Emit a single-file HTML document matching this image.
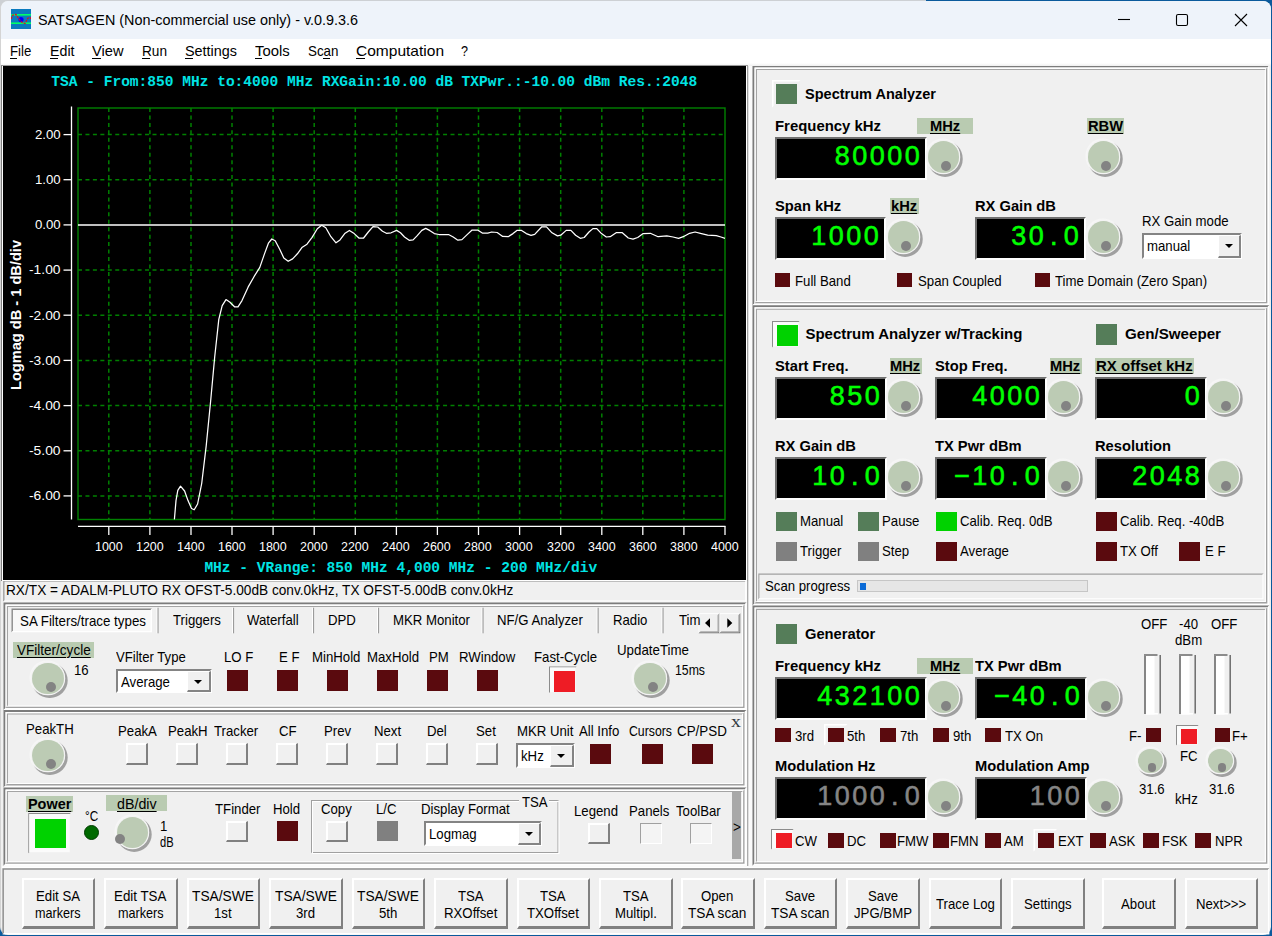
<!DOCTYPE html>
<html><head><meta charset="utf-8"><title>SATSAGEN</title>
<style>
html,body{margin:0;padding:0;}
body{width:1272px;height:936px;overflow:hidden;background:#0b5a9c;font-family:"Liberation Sans",sans-serif;position:relative;}
.a{position:absolute;box-sizing:border-box;}
.m{font-family:"Liberation Mono",monospace;}
.se{font-family:"Liberation Serif",serif;}
.t{position:absolute;white-space:nowrap;line-height:1;transform-origin:0 0;font-size:15px;}
#win{left:0px;top:1px;width:1271px;height:934px;background:#f0f0f0;border-radius:8px;overflow:hidden;border-left:1px solid #d4d4d4;}
#title{left:0;top:0;width:1272px;height:39px;background:#eef3fa;}
#menu{left:0;top:39px;width:1272px;height:24px;background:#fff;}
#menush{left:0;top:63px;width:1272px;height:3px;background:linear-gradient(#fff,#f0f0f0);}
.panel{border:1px solid #fff;background:#f0f0f0;}
.panel:before{content:"";position:absolute;left:0;top:0;right:0;bottom:0;border:2px solid #868686;border-right-color:#fff;border-bottom-color:#fff;}
.panel:after{content:"";position:absolute;left:2px;top:2px;right:0px;bottom:0px;border:2px solid #fff;border-right:2px solid #868686;border-bottom:2px solid #868686;}
.panel>div{position:absolute;left:4px;top:4px;right:2px;bottom:2px;border:1px solid #a0a0a0;border-right-color:#fff;border-bottom-color:#fff;}
.knob{border-radius:50%;background:#bccbb4;box-shadow:0 0 0 1.2px #f3f3f3, -0.8px -0.8px 0 1.7px #f6f6f6, 1.7px 1.9px 0 2px #a0a0a0;}
.knob i{position:absolute;border-radius:50%;background:#838383;}
.lcd{background:#000;border:2px solid #fff;border-top-color:#707070;border-left-color:#707070;text-align:right;white-space:nowrap;overflow:hidden;line-height:1;padding-top:4.7px;}
.lcd b{-webkit-text-stroke:0.55px currentColor;display:inline-block;width:var(--p);text-align:center;font-weight:normal;}
.combo{background:#fff;border:2px solid #fff;border-top-color:#848484;border-left-color:#848484;}
.combo .ct{position:absolute;left:3px;top:2.7px;line-height:1;white-space:nowrap;transform:scaleX(.88);transform-origin:0 0;}
.combo .cb{position:absolute;right:-1px;top:0;bottom:-1px;width:20.5px;background:#f0f0f0;border:1px solid #fff;border-right:2px solid #848484;border-bottom:2px solid #848484;}
.combo .cb i{position:absolute;left:50%;top:50%;margin:-1.6px 0 0 -4.2px;border:4.7px solid transparent;border-top:4.8px solid #000;border-bottom:0;}
.sbtn{background:#f0f0f0;border:1px solid #fff;border-right:2px solid #808080;border-bottom:2px solid #808080;box-shadow:inset 1px 1px 0 #fff;}
.fbtn{background:#f4f4f4;border:1px solid #a0a0a0;border-right-color:#fff;border-bottom-color:#fff;}
.btn{background:#f0f0f0;border:2px solid #fff;border-right:2px solid #808080;border-bottom:3px solid #808080;text-align:center;}
</style></head>
<body>
<div class="a" style="left:0;top:0;width:926px;height:9px;background:#cdd0d4"></div>
<div class="a" id="win">
</div>
<svg class="a" style="left:0;top:0" width="1272" height="936" viewBox="0 0 1272 936"><rect x="745.6" y="65" width="7" height="801" fill="#fbfbfb"/><rect x="747.1" y="65" width="1.2" height="801" fill="#a4a4a4"/><path d="M3.3 580.4H746.3L745.1999999999999 581.5H4.4V600.5L3.3 601.6Z" fill="#8a8a8a"/><path d="M746.3 601.6H3.3L4.4 600.5H745.1999999999999V581.5L746.3 580.4Z" fill="#ffffff"/><path d="M3.5 602.6H746.5L744.5 604.6H5.5V708L3.5 710Z" fill="#7c7c7c"/><path d="M746.5 710H3.5L5.5 708H744.5V604.6L746.5 602.6Z" fill="#ffffff"/><path d="M5.5 604.6H744.5L743.1 606.0H6.9V706.6L5.5 708Z" fill="#ffffff"/><path d="M744.5 708H5.5L6.9 706.6H743.1V606.0L744.5 604.6Z" fill="#a2a2a2"/><path d="M6.9 606.0H743.1L742.0 607.1H8.0V705.5L6.9 706.6Z" fill="#a4a4a4"/><path d="M743.1 706.6H6.9L8.0 705.5H742.0V607.1L743.1 606.0Z" fill="#ffffff"/><rect x="12" y="609" width="139.5" height="23" fill="#f8f8f8"/><path d="M11.5 608.5H152L150.6 609.9H12.9V630.9L11.5 632.3Z" fill="#8a8a8a"/><path d="M152 632.3H11.5L12.9 630.9H150.6V609.9L152 608.5Z" fill="#ffffff"/><rect x="156.5" y="607.7" width="1" height="25.6" fill="#fff"/><rect x="157.5" y="607.7" width="1.1" height="25.6" fill="#9c9c9c"/><rect x="232" y="607.7" width="1" height="25.6" fill="#fff"/><rect x="233" y="607.7" width="1.1" height="25.6" fill="#9c9c9c"/><rect x="312" y="607.7" width="1" height="25.6" fill="#fff"/><rect x="313" y="607.7" width="1.1" height="25.6" fill="#9c9c9c"/><rect x="377" y="607.7" width="1" height="25.6" fill="#fff"/><rect x="378" y="607.7" width="1.1" height="25.6" fill="#9c9c9c"/><rect x="481.5" y="607.7" width="1" height="25.6" fill="#fff"/><rect x="482.5" y="607.7" width="1.1" height="25.6" fill="#9c9c9c"/><rect x="596.6" y="607.7" width="1" height="25.6" fill="#fff"/><rect x="597.6" y="607.7" width="1.1" height="25.6" fill="#9c9c9c"/><rect x="661.5" y="607.7" width="1" height="25.6" fill="#fff"/><rect x="662.5" y="607.7" width="1.1" height="25.6" fill="#9c9c9c"/><rect x="697" y="609" width="44.5" height="25.5" fill="#f0f0f0"/><path d="M698.6 613.3H719.5L718.5 614.3H699.6V632.3L698.6 633.3Z" fill="#ffffff"/><path d="M719.5 633.3H698.6L699.6 632.3H718.5V614.3L719.5 613.3Z" fill="#707070"/><path d="M699.6 614.3H718.5L717.5 615.3H700.6V631.3L699.6 632.3Z" fill="#f0f0f0"/><path d="M718.5 632.3H699.6L700.6 631.3H717.5V615.3L718.5 614.3Z" fill="#a8a8a8"/><path d="M719.4 613.3H740.3L739.3 614.3H720.4V632.3L719.4 633.3Z" fill="#ffffff"/><path d="M740.3 633.3H719.4L720.4 632.3H739.3V614.3L740.3 613.3Z" fill="#707070"/><path d="M720.4 614.3H739.3L738.3 615.3H721.4V631.3L720.4 632.3Z" fill="#f0f0f0"/><path d="M739.3 632.3H720.4L721.4 631.3H738.3V615.3L739.3 614.3Z" fill="#a8a8a8"/><path d="M549 666.5H576.6L575.6 667.5H550V692.1L549 693.1Z" fill="#8c8c8c"/><rect x="550" y="667.5" width="25.6" height="24.6" fill="#fbfbfb"/><path d="M3.5 710H746.5L744.5 712H5.5V785.5L3.5 787.5Z" fill="#7c7c7c"/><path d="M746.5 787.5H3.5L5.5 785.5H744.5V712L746.5 710Z" fill="#ffffff"/><path d="M5.5 712H744.5L743.1 713.4H6.9V784.1L5.5 785.5Z" fill="#ffffff"/><path d="M744.5 785.5H5.5L6.9 784.1H743.1V713.4L744.5 712Z" fill="#a2a2a2"/><path d="M6.9 713.4H743.1L742.0 714.5H8.0V783.0L6.9 784.1Z" fill="#a4a4a4"/><path d="M743.1 784.1H6.9L8.0 783.0H742.0V714.5L743.1 713.4Z" fill="#ffffff"/><path d="M3.5 787.5H746.5L744.5 789.5H5.5V863.7L3.5 865.7Z" fill="#7c7c7c"/><path d="M746.5 865.7H3.5L5.5 863.7H744.5V789.5L746.5 787.5Z" fill="#ffffff"/><path d="M5.5 789.5H744.5L743.1 790.9H6.9V862.3000000000001L5.5 863.7Z" fill="#ffffff"/><path d="M744.5 863.7H5.5L6.9 862.3000000000001H743.1V790.9L744.5 789.5Z" fill="#a2a2a2"/><path d="M6.9 790.9H743.1L742.0 792.0H8.0V861.2L6.9 862.3000000000001Z" fill="#a4a4a4"/><path d="M743.1 862.3000000000001H6.9L8.0 861.2H742.0V792.0L743.1 790.9Z" fill="#ffffff"/><path d="M28.3 813.0H70.8L69.8 814.0H29.3V852.2L28.3 853.2Z" fill="#8c8c8c"/><rect x="29.3" y="814.0" width="40.5" height="38.2" fill="#fbfbfb"/><path d="M311 800H558.5L557.5 801H312V852L311 853Z" fill="#a0a0a0"/><path d="M558.5 853H311L312 852H557.5V801L558.5 800Z" fill="#a0a0a0"/><path d="M312 801H559.5L558.5 802H313V853L312 854Z" fill="#ffffff"/><path d="M559.5 854H312L313 853H558.5V802L559.5 801Z" fill="#ffffff"/><path d="M752.5 65.5H1269.3L1267.3 67.5H754.5V303.3L752.5 305.3Z" fill="#7c7c7c"/><path d="M1269.3 305.3H752.5L754.5 303.3H1267.3V67.5L1269.3 65.5Z" fill="#ffffff"/><path d="M754.5 67.5H1267.3L1265.8999999999999 68.9H755.9V301.90000000000003L754.5 303.3Z" fill="#ffffff"/><path d="M1267.3 303.3H754.5L755.9 301.90000000000003H1265.8999999999999V68.9L1267.3 67.5Z" fill="#a2a2a2"/><path d="M755.9 68.9H1265.8999999999999L1264.8 70.0H757.0V300.8L755.9 301.90000000000003Z" fill="#a4a4a4"/><path d="M1265.8999999999999 301.90000000000003H755.9L757.0 300.8H1264.8V70.0L1265.8999999999999 68.9Z" fill="#ffffff"/><path d="M772 80H800.5L798.9 81.6H773.6V105.9L772 107.5Z" fill="#ffffff"/><path d="M752.5 305.3H1269.3L1267.3 307.3H754.5V603.4L752.5 605.4Z" fill="#7c7c7c"/><path d="M1269.3 605.4H752.5L754.5 603.4H1267.3V307.3L1269.3 305.3Z" fill="#ffffff"/><path d="M754.5 307.3H1267.3L1265.8999999999999 308.7H755.9V602.0L754.5 603.4Z" fill="#ffffff"/><path d="M1267.3 603.4H754.5L755.9 602.0H1265.8999999999999V308.7L1267.3 307.3Z" fill="#a2a2a2"/><path d="M755.9 308.7H1265.8999999999999L1264.8 309.8H757.0V600.9L755.9 602.0Z" fill="#a4a4a4"/><path d="M1265.8999999999999 602.0H755.9L757.0 600.9H1264.8V309.8L1265.8999999999999 308.7Z" fill="#ffffff"/><path d="M772 321H799.6L798.6 322H773V346.6L772 347.6Z" fill="#8c8c8c"/><rect x="773" y="322" width="25.6" height="24.6" fill="#fbfbfb"/><path d="M758.3 573.6H1263.5L1262.4 574.7H759.4V598.1999999999999L758.3 599.3Z" fill="#a0a0a0"/><path d="M1263.5 599.3H758.3L759.4 598.1999999999999H1262.4V574.7L1263.5 573.6Z" fill="#ffffff"/><path d="M752.5 605.4H1269.3L1267.3 607.4H754.5V863.7L752.5 865.7Z" fill="#7c7c7c"/><path d="M1269.3 865.7H752.5L754.5 863.7H1267.3V607.4L1269.3 605.4Z" fill="#ffffff"/><path d="M754.5 607.4H1267.3L1265.8999999999999 608.8H755.9V862.3000000000001L754.5 863.7Z" fill="#ffffff"/><path d="M1267.3 863.7H754.5L755.9 862.3000000000001H1265.8999999999999V608.8L1267.3 607.4Z" fill="#a2a2a2"/><path d="M755.9 608.8H1265.8999999999999L1264.8 609.9H757.0V861.2L755.9 862.3000000000001Z" fill="#a4a4a4"/><path d="M1265.8999999999999 862.3000000000001H755.9L757.0 861.2H1264.8V609.9L1265.8999999999999 608.8Z" fill="#ffffff"/><path d="M824 724H847.5L845.9 725.6H825.6V743.9L824 745.5Z" fill="#ffffff"/><path d="M771 829H793.6L792.6 830H772V848.6L771 849.6Z" fill="#8c8c8c"/><rect x="772" y="830" width="20.6" height="18.6" fill="#fbfbfb"/><path d="M1033.5 829H1057.0L1055.4 830.6H1035.1V849.9L1033.5 851.5Z" fill="#ffffff"/><rect x="1144" y="654" width="2" height="60" fill="#858585"/><rect x="1144" y="654" width="13.5" height="2" fill="#8c8c8c"/><rect x="1146" y="656" width="8.5" height="58.5" fill="#fff"/><rect x="1146" y="713" width="12" height="1.5" fill="#fff"/><rect x="1159.6" y="655" width="1.1" height="58.5" fill="#3c3c3c"/><rect x="1179" y="654" width="2" height="60" fill="#858585"/><rect x="1179" y="654" width="13.5" height="2" fill="#8c8c8c"/><rect x="1181" y="656" width="8.5" height="58.5" fill="#fff"/><rect x="1181" y="713" width="12" height="1.5" fill="#fff"/><rect x="1194.6" y="655" width="1.1" height="58.5" fill="#3c3c3c"/><rect x="1214" y="654" width="2" height="60" fill="#858585"/><rect x="1214" y="654" width="13.5" height="2" fill="#8c8c8c"/><rect x="1216" y="656" width="8.5" height="58.5" fill="#fff"/><rect x="1216" y="713" width="12" height="1.5" fill="#fff"/><rect x="1229.6" y="655" width="1.1" height="58.5" fill="#3c3c3c"/><path d="M1176 725H1198.6L1197.6 726H1177V744.6L1176 745.6Z" fill="#8c8c8c"/><rect x="1177" y="726" width="20.6" height="18.6" fill="#fbfbfb"/><rect x="2" y="866.3" width="1267" height="2" fill="#ffffff"/><path d="M2.4 868.2H1269.4L1267.9 869.7H3.9V933.0L2.4 934.5Z" fill="#8e8e8e"/><path d="M1269.4 934.5H2.4L3.9 933.0H1267.9V869.7L1269.4 868.2Z" fill="#ffffff"/></svg>
<div class="a" id="title" style="left:1px;top:1px;width:1270px;height:38px;border-radius:7px 8px 0 0"></div>
<svg class="a" style="left:11px;top:9px" width="20" height="20" viewBox="0 0 20 20"><rect width="20" height="20" fill="#0a7abf"/><rect y="5" width="20" height="1.6" fill="#00ff66"/><rect y="13.4" width="20" height="1.6" fill="#00ff66"/><circle cx="10" cy="10.5" r="2.6" fill="#0000ff"/><polyline points="0,10 2,6 5,5.5 8,10 11,13.5 14,14.5 17,9 19,8.5 20,10" fill="none" stroke="#e0101a" stroke-width="1.2" stroke-dasharray="2.2 1"/></svg>
<span class="t" style="left:37.6px;top:12.1px;font-size:15px;transform:scaleX(0.959);">SATSAGEN (Non-commercial use only) - v.0.9.3.6</span>
<svg class="a" style="left:1100px;top:0" width="170" height="39" viewBox="0 0 170 39"><g fill="none" stroke="#000" stroke-width="1.1"><path d="M18 19.5H30"/><rect x="76.5" y="14.5" width="11" height="11" rx="1.6"/><path d="M135 14L147 26M147 14L135 26"/></g></svg>
<div class="a" id="menu" style="left:1px;width:1270px"></div><div class="a" id="menush" style="left:1px;width:1270px"></div>
<span class="t" style="left:10.4px;top:43.1px;font-size:15px;transform:scaleX(0.881);">File</span>
<span class="t" style="left:50.0px;top:43.1px;font-size:15px;transform:scaleX(0.948);">Edit</span>
<span class="t" style="left:92.0px;top:43.1px;font-size:15px;transform:scaleX(0.977);">View</span>
<span class="t" style="left:141.5px;top:43.1px;font-size:15px;transform:scaleX(0.908);">Run</span>
<span class="t" style="left:185.0px;top:43.1px;font-size:15px;transform:scaleX(0.959);">Settings</span>
<span class="t" style="left:254.7px;top:43.1px;font-size:15px;transform:scaleX(0.991);">Tools</span>
<span class="t" style="left:307.5px;top:43.1px;font-size:15px;transform:scaleX(0.892);">Scan</span>
<span class="t" style="left:356.0px;top:43.1px;font-size:15px;transform:scaleX(1.035);">Computation</span>
<span class="t" style="left:461.0px;top:43.1px;font-size:15px;transform:scaleX(0.839);">?</span>
<div class="a " style="left:10.4px;top:58px;width:7px;height:1px;background:#000;"></div>
<div class="a " style="left:50px;top:58px;width:7.5px;height:1px;background:#000;"></div>
<div class="a " style="left:92px;top:58px;width:8.5px;height:1px;background:#000;"></div>
<div class="a " style="left:141.5px;top:58px;width:8.5px;height:1px;background:#000;"></div>
<div class="a " style="left:185px;top:58px;width:8px;height:1px;background:#000;"></div>
<div class="a " style="left:254.7px;top:58px;width:7.5px;height:1px;background:#000;"></div>
<div class="a " style="left:322.5px;top:58px;width:7px;height:1px;background:#000;"></div>
<div class="a " style="left:356px;top:58px;width:9px;height:1px;background:#000;"></div>
<div class="a " style="left:1px;top:65px;width:747px;height:516px;background:#fff;border-left:1px solid #808080;border-top:1px solid #9a9a9a;border-right:1px solid #a0a0a0;"></div>
<div class="a " style="left:3px;top:66px;width:743px;height:513.5px;background:#000;"></div>
<svg class="a" style="left:0;top:0" width="750" height="582" viewBox="0 0 750 582"><g fill="none" stroke="#008000" stroke-width="1.5" stroke-dasharray="4 3.45" ><path d="M108.8 108.0V519.5"/><path d="M149.9 108.0V519.5"/><path d="M191.0 108.0V519.5"/><path d="M232.0 108.0V519.5"/><path d="M273.1 108.0V519.5"/><path d="M314.2 108.0V519.5"/><path d="M355.3 108.0V519.5"/><path d="M396.4 108.0V519.5"/><path d="M437.4 108.0V519.5"/><path d="M478.5 108.0V519.5"/><path d="M519.6 108.0V519.5"/><path d="M560.7 108.0V519.5"/><path d="M601.8 108.0V519.5"/><path d="M642.8 108.0V519.5"/><path d="M683.9 108.0V519.5"/><path d="M78.0 134.6H725.0"/><path d="M78.0 179.7H725.0"/><path d="M78.0 270.1H725.0"/><path d="M78.0 315.2H725.0"/><path d="M78.0 360.4H725.0"/><path d="M78.0 405.6H725.0"/><path d="M78.0 450.8H725.0"/><path d="M78.0 495.9H725.0"/></g><rect x="78.0" y="108.0" width="647.0" height="411.5" fill="none" stroke="#008000" stroke-width="1.4"/><path d="M78.0 224.9H725.0" stroke="#fff" stroke-width="1.5" fill="none"/><g stroke="#fff" stroke-width="1.3" fill="none"><path d="M71.5 106.5V519.5"/><path d="M63.5 134.6H71.5"/><path d="M63.5 179.7H71.5"/><path d="M63.5 224.9H71.5"/><path d="M63.5 270.1H71.5"/><path d="M63.5 315.2H71.5"/><path d="M63.5 360.4H71.5"/><path d="M63.5 405.6H71.5"/><path d="M63.5 450.8H71.5"/><path d="M63.5 495.9H71.5"/><path d="M78.0 526.3H725.5"/><path d="M108.8 526.3V535"/><path d="M149.9 526.3V535"/><path d="M191.0 526.3V535"/><path d="M232.0 526.3V535"/><path d="M273.1 526.3V535"/><path d="M314.2 526.3V535"/><path d="M355.3 526.3V535"/><path d="M396.4 526.3V535"/><path d="M437.4 526.3V535"/><path d="M478.5 526.3V535"/><path d="M519.6 526.3V535"/><path d="M560.7 526.3V535"/><path d="M601.8 526.3V535"/><path d="M642.8 526.3V535"/><path d="M683.9 526.3V535"/><path d="M725.0 526.3V535"/></g><path d="M174.4 519.4 L176.0 500.6 L177.8 490.3 L180.5 486.2 L184.6 491.0 L188.0 500.6 L191.5 508.5 L194.2 509.8 L197.6 504.0 L201.7 483.5 L206.2 445.9 L210.6 401.5 L214.7 357.0 L218.8 319.4 L222.2 305.7 L226.0 299.6 L230.0 302.3 L234.5 306.8 L238.0 306.8 L242.0 300.6 L248.2 286.9 L254.0 276.7 L259.8 267.4 L264.3 254.4 L268.4 243.2 L271.8 239.0 L275.2 240.8 L279.7 249.3 L283.8 257.9 L288.2 261.3 L292.6 258.9 L297.4 253.8 L301.9 247.6 L307.0 244.2 L312.1 237.4 L317.3 228.8 L321.7 225.3 L325.8 227.8 L330.9 236.7 L336.0 242.8 L340.0 239.9 L344.7 233.6 L349.4 230.4 L354.2 233.6 L358.9 238.0 L363.6 238.0 L368.3 232.0 L373.0 226.7 L377.7 227.0 L382.5 231.2 L386.4 233.3 L391.1 232.8 L396.6 230.4 L400.5 232.8 L404.5 237.0 L409.2 240.3 L413.1 239.9 L417.0 235.9 L421.8 230.4 L425.7 228.4 L429.6 230.4 L434.3 233.6 L439.0 234.5 L448.5 234.5 L453.2 237.0 L457.9 240.2 L461.9 239.6 L467.4 234.4 L472.1 230.0 L477.6 230.0 L482.3 233.1 L487.8 233.1 L491.7 232.0 L497.2 232.5 L502.7 236.4 L508.2 236.7 L513.0 233.6 L516.9 230.4 L521.6 230.4 L526.3 233.6 L531.0 235.4 L534.7 234.4 L541.8 226.8 L546.5 226.8 L552.0 232.8 L557.5 235.9 L560.7 235.2 L566.2 230.4 L570.9 230.4 L575.6 235.2 L580.3 238.3 L584.2 237.5 L589.0 232.0 L592.9 228.6 L596.8 228.6 L601.5 233.6 L606.3 237.0 L610.2 236.7 L616.5 232.5 L622.0 232.5 L628.3 238.0 L633.0 239.2 L637.7 237.5 L643.2 233.6 L650.3 233.3 L658.1 236.7 L666.8 235.9 L673.1 237.0 L678.6 238.3 L683.3 236.7 L689.6 233.3 L695.1 232.0 L701.4 233.6 L707.7 235.2 L716.3 235.6 L721.0 237.0 L725.0 238.3" stroke="#fff" stroke-width="1.25" fill="none" stroke-linejoin="round"/></svg>
<span class="t m" style="left:51.3px;top:74.9px;font-size:14.55px;font-weight:bold;color:#00e4e4;">TSA - From:850 MHz to:4000 MHz RXGain:10.00 dB TXPwr.:-10.00 dBm Res.:2048</span>
<span class="t m" style="left:204.4px;top:560.9px;font-size:14.55px;font-weight:bold;color:#00e4e4;">MHz - VRange: 850 MHz 4,000 MHz - 200 MHz/div</span>
<span class="t" style="left:34.8px;top:127.9px;font-size:13px;color:#fff;transform:scaleX(1.016);">2.00</span>
<span class="t" style="left:34.8px;top:173.0px;font-size:13px;color:#fff;transform:scaleX(1.016);">1.00</span>
<span class="t" style="left:34.8px;top:218.2px;font-size:13px;color:#fff;transform:scaleX(1.016);">0.00</span>
<span class="t" style="left:29.0px;top:263.4px;font-size:13px;color:#fff;transform:scaleX(1.063);">-1.00</span>
<span class="t" style="left:29.0px;top:308.5px;font-size:13px;color:#fff;transform:scaleX(1.063);">-2.00</span>
<span class="t" style="left:29.0px;top:353.7px;font-size:13px;color:#fff;transform:scaleX(1.063);">-3.00</span>
<span class="t" style="left:29.0px;top:398.9px;font-size:13px;color:#fff;transform:scaleX(1.063);">-4.00</span>
<span class="t" style="left:29.0px;top:444.0px;font-size:13px;color:#fff;transform:scaleX(1.063);">-5.00</span>
<span class="t" style="left:29.0px;top:489.2px;font-size:13px;color:#fff;transform:scaleX(1.063);">-6.00</span>
<span class="t" style="left:94.7px;top:539.8px;font-size:13px;color:#fff;transform:scaleX(0.958);">1000</span>
<span class="t" style="left:135.7px;top:539.8px;font-size:13px;color:#fff;transform:scaleX(0.958);">1200</span>
<span class="t" style="left:176.8px;top:539.8px;font-size:13px;color:#fff;transform:scaleX(0.958);">1400</span>
<span class="t" style="left:217.9px;top:539.8px;font-size:13px;color:#fff;transform:scaleX(0.958);">1600</span>
<span class="t" style="left:259.0px;top:539.8px;font-size:13px;color:#fff;transform:scaleX(0.958);">1800</span>
<span class="t" style="left:300.0px;top:539.8px;font-size:13px;color:#fff;transform:scaleX(0.958);">2000</span>
<span class="t" style="left:341.1px;top:539.8px;font-size:13px;color:#fff;transform:scaleX(0.958);">2200</span>
<span class="t" style="left:382.2px;top:539.8px;font-size:13px;color:#fff;transform:scaleX(0.958);">2400</span>
<span class="t" style="left:423.3px;top:539.8px;font-size:13px;color:#fff;transform:scaleX(0.958);">2600</span>
<span class="t" style="left:464.4px;top:539.8px;font-size:13px;color:#fff;transform:scaleX(0.958);">2800</span>
<span class="t" style="left:505.4px;top:539.8px;font-size:13px;color:#fff;transform:scaleX(0.958);">3000</span>
<span class="t" style="left:546.5px;top:539.8px;font-size:13px;color:#fff;transform:scaleX(0.958);">3200</span>
<span class="t" style="left:587.6px;top:539.8px;font-size:13px;color:#fff;transform:scaleX(0.958);">3400</span>
<span class="t" style="left:628.7px;top:539.8px;font-size:13px;color:#fff;transform:scaleX(0.958);">3600</span>
<span class="t" style="left:669.8px;top:539.8px;font-size:13px;color:#fff;transform:scaleX(0.958);">3800</span>
<span class="t" style="left:710.8px;top:539.8px;font-size:13px;color:#fff;transform:scaleX(0.958);">4000</span>
<span class="t" style="left:8.1px;top:389.6px;font-size:15px;font-weight:bold;color:#fff;transform:rotate(-90deg) scaleX(0.973);transform-origin:0 0;">Logmag dB - 1 dB/div</span>
<span class="t" style="left:6.0px;top:582.3px;font-size:15px;transform:scaleX(0.911);">RX/TX = ADALM-PLUTO RX OFST-5.00dB conv.0kHz, TX OFST-5.00dB conv.0kHz</span>
<span class="t" style="left:20.0px;top:613.3px;font-size:15px;transform:scaleX(0.889);">SA Filters/trace types</span>
<span class="t" style="left:173.0px;top:612.3px;font-size:15px;transform:scaleX(0.880);">Triggers</span>
<span class="t" style="left:247.0px;top:612.3px;font-size:15px;transform:scaleX(0.880);">Waterfall</span>
<span class="t" style="left:327.5px;top:612.3px;font-size:15px;transform:scaleX(0.880);">DPD</span>
<span class="t" style="left:392.5px;top:612.3px;font-size:15px;transform:scaleX(0.880);">MKR Monitor</span>
<span class="t" style="left:497.0px;top:612.3px;font-size:15px;transform:scaleX(0.880);">NF/G Analyzer</span>
<span class="t" style="left:612.9px;top:612.3px;font-size:15px;transform:scaleX(0.878);">Radio</span>
<span class="t" style="left:678.6px;top:612.3px;font-size:15px;transform:scaleX(0.880);">Tim</span>
<svg class="a" style="left:698px;top:613px" width="44" height="21"><path d="M12 5.3v9.4l-5-4.7z M29.3 5.3v9.4l5-4.7z" fill="#000"/></svg>
<div class="a " style="left:13.2px;top:641.5px;width:81.3px;height:16px;background:#b9cbb1;"></div>
<span class="t" style="left:17.4px;top:641.6px;font-size:15px;text-decoration:underline;text-underline-offset:1.5px;transform:scaleX(0.902);">VFilter/cycle</span>
<div class="a knob" style="left:32.3px;top:662.5px;width:31.4px;height:31.4px;"><i style="left:13.7px;top:19.7px;width:10px;height:10px"></i></div>
<span class="t" style="left:74.0px;top:662.3px;font-size:15px;transform:scaleX(0.880);">16</span>
<span class="t" style="left:116.0px;top:649.3px;font-size:15px;transform:scaleX(0.875);">VFilter Type</span>
<div class="a combo" style="left:116px;top:669.3px;width:95.5px;height:24px;"><span class="ct" style="font-size:15px">Average</span><div class="cb"><i></i></div></div>
<span class="t" style="left:223.5px;top:649.3px;font-size:15px;transform:scaleX(0.880);">LO F</span>
<div class="a " style="left:227.0px;top:670px;width:21px;height:21px;background:#5a0a0e;"></div>
<span class="t" style="left:279.0px;top:649.3px;font-size:15px;transform:scaleX(0.880);">E F</span>
<div class="a " style="left:277.0px;top:670px;width:21px;height:21px;background:#5a0a0e;"></div>
<span class="t" style="left:311.5px;top:649.3px;font-size:15px;transform:scaleX(0.880);">MinHold</span>
<div class="a " style="left:327.0px;top:670px;width:21px;height:21px;background:#5a0a0e;"></div>
<span class="t" style="left:366.5px;top:649.3px;font-size:15px;transform:scaleX(0.880);">MaxHold</span>
<div class="a " style="left:377.0px;top:670px;width:21px;height:21px;background:#5a0a0e;"></div>
<span class="t" style="left:428.5px;top:649.3px;font-size:15px;transform:scaleX(0.880);">PM</span>
<div class="a " style="left:427.0px;top:670px;width:21px;height:21px;background:#5a0a0e;"></div>
<span class="t" style="left:459.0px;top:649.3px;font-size:15px;transform:scaleX(0.880);">RWindow</span>
<div class="a " style="left:477.0px;top:670px;width:21px;height:21px;background:#5a0a0e;"></div>
<span class="t" style="left:534.0px;top:649.3px;font-size:15px;transform:scaleX(0.880);">Fast-Cycle</span>
<div class="a " style="left:554px;top:670.5px;width:21px;height:21px;background:#ee1c25;"></div>
<span class="t" style="left:616.5px;top:641.9px;font-size:15px;transform:scaleX(0.887);">UpdateTime</span>
<div class="a knob" style="left:634.3px;top:662.5px;width:31.4px;height:31.4px;"><i style="left:13.7px;top:19.7px;width:10px;height:10px"></i></div>
<span class="t" style="left:674.6px;top:661.9px;font-size:15px;transform:scaleX(0.818);">15ms</span>
<span class="t" style="left:26.0px;top:721.3px;font-size:15px;transform:scaleX(0.880);">PeakTH</span>
<div class="a knob" style="left:32.3px;top:739.8px;width:31.4px;height:31.4px;"><i style="left:13.7px;top:19.7px;width:10px;height:10px"></i></div>
<span class="t" style="left:117.5px;top:723.3px;font-size:15px;transform:scaleX(0.880);">PeakA</span>
<div class="a sbtn" style="left:126px;top:743px;width:22px;height:22px;"></div>
<span class="t" style="left:167.5px;top:723.3px;font-size:15px;transform:scaleX(0.880);">PeakH</span>
<div class="a sbtn" style="left:176px;top:743px;width:22px;height:22px;"></div>
<span class="t" style="left:214.0px;top:723.3px;font-size:15px;transform:scaleX(0.880);">Tracker</span>
<div class="a sbtn" style="left:226px;top:743px;width:22px;height:22px;"></div>
<span class="t" style="left:278.5px;top:723.3px;font-size:15px;transform:scaleX(0.880);">CF</span>
<div class="a sbtn" style="left:276px;top:743px;width:22px;height:22px;"></div>
<span class="t" style="left:324.0px;top:723.3px;font-size:15px;transform:scaleX(0.880);">Prev</span>
<div class="a sbtn" style="left:326px;top:743px;width:22px;height:22px;"></div>
<span class="t" style="left:373.5px;top:723.3px;font-size:15px;transform:scaleX(0.880);">Next</span>
<div class="a sbtn" style="left:376px;top:743px;width:22px;height:22px;"></div>
<span class="t" style="left:426.5px;top:723.3px;font-size:15px;transform:scaleX(0.880);">Del</span>
<div class="a sbtn" style="left:426px;top:743px;width:22px;height:22px;"></div>
<span class="t" style="left:476.0px;top:723.3px;font-size:15px;transform:scaleX(0.880);">Set</span>
<div class="a sbtn" style="left:476px;top:743px;width:22px;height:22px;"></div>
<span class="t" style="left:516.5px;top:723.3px;font-size:15px;transform:scaleX(0.880);">MKR Unit</span>
<div class="a combo" style="left:516px;top:743px;width:58.5px;height:24.5px;"><span class="ct" style="font-size:15px">kHz</span><div class="cb"><i></i></div></div>
<span class="t" style="left:579.0px;top:723.3px;font-size:15px;transform:scaleX(0.880);">All Info</span>
<div class="a " style="left:590px;top:744px;width:21px;height:20px;background:#5a0a0e;"></div>
<span class="t" style="left:629.0px;top:723.3px;font-size:15px;transform:scaleX(0.819);">Cursors</span>
<div class="a " style="left:642px;top:744px;width:21px;height:20px;background:#5a0a0e;"></div>
<span class="t" style="left:676.6px;top:723.3px;font-size:15px;transform:scaleX(0.893);">CP/PSD</span>
<div class="a " style="left:692px;top:744px;width:21px;height:20px;background:#5a0a0e;"></div>
<span class="t se" style="left:731.3px;top:714px;font-size:16.5px;color:#303840;transform:scaleX(1.2)">x</span>
<div class="a " style="left:26px;top:795.5px;width:47.2px;height:16px;background:#b9cbb1;"></div>
<span class="t" style="left:28.0px;top:795.6px;font-size:15px;font-weight:bold;text-decoration:underline;text-underline-offset:1.5px;transform:scaleX(0.962);">Power</span>
<div class="a " style="left:35px;top:818.7px;width:31px;height:29px;background:#00d200;"></div>
<span class="t" style="left:84.5px;top:807.9px;font-size:15px;transform:scaleX(0.784);">°C</span>
<div class="a" style="left:83.6px;top:825px;width:15px;height:15px;border-radius:50%;background:#006a00;border:1.5px solid #003c00;"></div>
<div class="a " style="left:106px;top:795px;width:61px;height:16px;background:#b9cbb1;"></div>
<span class="t" style="left:116.6px;top:795.6px;font-size:15px;text-decoration:underline;text-underline-offset:1.5px;transform:scaleX(0.950);">dB/div</span>
<div class="a knob" style="left:117.10000000000001px;top:817.0999999999999px;width:31.4px;height:31.4px;"><i style="left:-1.8000000000000007px;top:16.799999999999997px;width:10px;height:10px"></i></div>
<span class="t" style="left:160.0px;top:817.9px;font-size:15px;transform:scaleX(0.880);">1</span>
<span class="t" style="left:160.0px;top:834.3px;font-size:15px;transform:scaleX(0.741);">dB</span>
<span class="t" style="left:215.0px;top:800.9px;font-size:15px;transform:scaleX(0.880);">TFinder</span>
<div class="a sbtn" style="left:226.4px;top:821px;width:22px;height:21px;"></div>
<span class="t" style="left:272.5px;top:800.9px;font-size:15px;transform:scaleX(0.880);">Hold</span>
<div class="a " style="left:277px;top:821px;width:21px;height:20px;background:#5a0a0e;"></div>
<div class="a " style="left:519px;top:796px;width:30px;height:14px;background:#f0f0f0;"></div>
<span class="t" style="left:521.5px;top:794.3px;font-size:15px;transform:scaleX(0.880);">TSA</span>
<span class="t" style="left:321.0px;top:800.9px;font-size:15px;transform:scaleX(0.880);">Copy</span>
<div class="a sbtn" style="left:326px;top:821px;width:22px;height:21px;"></div>
<span class="t" style="left:376.0px;top:800.9px;font-size:15px;transform:scaleX(0.880);">L/C</span>
<div class="a " style="left:377px;top:821px;width:21px;height:20px;background:#808080;"></div>
<span class="t" style="left:421.0px;top:800.9px;font-size:15px;transform:scaleX(0.880);">Display Format</span>
<div class="a combo" style="left:424px;top:821px;width:118px;height:24.5px;"><span class="ct" style="font-size:15px">Logmag</span><div class="cb"><i></i></div></div>
<span class="t" style="left:573.5px;top:803.3px;font-size:15px;transform:scaleX(0.880);">Legend</span>
<div class="a sbtn" style="left:587.5px;top:822.5px;width:22px;height:21px;"></div>
<span class="t" style="left:629.0px;top:803.3px;font-size:15px;transform:scaleX(0.880);">Panels</span>
<div class="a fbtn" style="left:640px;top:822.5px;width:22px;height:21px;"></div>
<span class="t" style="left:676.0px;top:803.3px;font-size:15px;transform:scaleX(0.880);">ToolBar</span>
<div class="a fbtn" style="left:690px;top:822.5px;width:22px;height:21px;"></div>
<div class="a " style="left:731.5px;top:792px;width:9.5px;height:67px;background:#a8a8a8;"></div>
<span class="t" style="left:733.0px;top:819.3px;font-size:15px;transform:scaleX(0.900);">&gt;</span>
<div class="a " style="left:776px;top:84px;width:21px;height:20px;background:#557d59;"></div>
<span class="t" style="left:804.6px;top:86.3px;font-size:15px;font-weight:bold;transform:scaleX(0.968);">Spectrum Analyzer</span>
<span class="t" style="left:775.0px;top:118.3px;font-size:15px;font-weight:bold;transform:scaleX(0.993);">Frequency kHz</span>
<div class="a " style="left:917px;top:118px;width:56px;height:16px;background:#b9cbb1;"></div>
<span class="t" style="left:929.9px;top:118.3px;font-size:15px;font-weight:bold;text-decoration:underline;text-underline-offset:1.5px;transform:scaleX(0.980);">MHz</span>
<div class="a " style="left:1087px;top:118px;width:37px;height:16px;background:#b9cbb1;"></div>
<span class="t" style="left:1087.9px;top:118.3px;font-size:15px;font-weight:bold;text-decoration:underline;text-underline-offset:1.5px;transform:scaleX(0.980);">RBW</span>
<div class="a lcd" style="left:774.5px;top:136.5px;width:152px;height:43px;color:#00ff00;font-size:27px;padding-right:3.6px;--p:17.5px"><b>8</b><b>0</b><b>0</b><b>0</b><b>0</b></div>
<div class="a knob" style="left:927.8px;top:141.3px;width:31.4px;height:31.4px;"><i style="left:13.7px;top:19.7px;width:10px;height:10px"></i></div>
<div class="a knob" style="left:1087.8px;top:141.3px;width:31.4px;height:31.4px;"><i style="left:13.7px;top:19.7px;width:10px;height:10px"></i></div>
<span class="t" style="left:775.0px;top:198.3px;font-size:15px;font-weight:bold;transform:scaleX(0.980);">Span kHz</span>
<div class="a " style="left:889.5px;top:198px;width:29px;height:16px;background:#b9cbb1;"></div>
<span class="t" style="left:890.9px;top:198.3px;font-size:15px;font-weight:bold;text-decoration:underline;text-underline-offset:1.5px;transform:scaleX(0.980);">kHz</span>
<div class="a lcd" style="left:774.5px;top:216.5px;width:111px;height:43px;color:#00ff00;font-size:27px;padding-right:3.6px;--p:17.5px"><b>1</b><b>0</b><b>0</b><b>0</b></div>
<div class="a knob" style="left:887.8px;top:221.3px;width:31.4px;height:31.4px;"><i style="left:13.7px;top:19.7px;width:10px;height:10px"></i></div>
<span class="t" style="left:975.0px;top:198.3px;font-size:15px;font-weight:bold;transform:scaleX(0.980);">RX Gain dB</span>
<div class="a lcd" style="left:974.5px;top:216.5px;width:111px;height:43px;color:#00ff00;font-size:27px;padding-right:3.6px;--p:17.5px"><b>3</b><b>0</b><b>.</b><b>0</b></div>
<div class="a knob" style="left:1087.8px;top:221.3px;width:31.4px;height:31.4px;"><i style="left:13.7px;top:19.7px;width:10px;height:10px"></i></div>
<span class="t" style="left:1142.0px;top:213.3px;font-size:15px;transform:scaleX(0.880);">RX Gain mode</span>
<div class="a combo" style="left:1142px;top:233px;width:100px;height:25.5px;"><span class="ct" style="font-size:15px">manual</span><div class="cb"><i></i></div></div>
<div class="a " style="left:775px;top:273px;width:15px;height:14px;background:#5a0a0e;"></div>
<span class="t" style="left:795.0px;top:273.3px;font-size:15px;transform:scaleX(0.880);">Full Band</span>
<div class="a " style="left:897px;top:273px;width:15px;height:14px;background:#5a0a0e;"></div>
<span class="t" style="left:917.5px;top:273.3px;font-size:15px;transform:scaleX(0.880);">Span Coupled</span>
<div class="a " style="left:1035px;top:273px;width:15px;height:14px;background:#5a0a0e;"></div>
<span class="t" style="left:1055.0px;top:273.3px;font-size:15px;transform:scaleX(0.880);">Time Domain (Zero Span)</span>
<div class="a " style="left:777px;top:325px;width:21px;height:21px;background:#00d200;"></div>
<span class="t" style="left:805.4px;top:326.3px;font-size:15px;font-weight:bold;">Spectrum Analyzer w/Tracking</span>
<div class="a " style="left:1096px;top:324px;width:21px;height:21px;background:#557d59;"></div>
<span class="t" style="left:1125.0px;top:326.3px;font-size:15px;font-weight:bold;transform:scaleX(1.010);">Gen/Sweeper</span>
<span class="t" style="left:775.0px;top:358.3px;font-size:15px;font-weight:bold;transform:scaleX(0.980);">Start Freq.</span>
<div class="a " style="left:889.5px;top:358px;width:32px;height:16px;background:#b9cbb1;"></div>
<span class="t" style="left:890.4px;top:358.3px;font-size:15px;font-weight:bold;text-decoration:underline;text-underline-offset:1.5px;transform:scaleX(0.980);">MHz</span>
<span class="t" style="left:935.0px;top:358.3px;font-size:15px;font-weight:bold;transform:scaleX(0.980);">Stop Freq.</span>
<div class="a " style="left:1049.5px;top:358px;width:32px;height:16px;background:#b9cbb1;"></div>
<span class="t" style="left:1050.4px;top:358.3px;font-size:15px;font-weight:bold;text-decoration:underline;text-underline-offset:1.5px;transform:scaleX(0.980);">MHz</span>
<div class="a " style="left:1095px;top:358px;width:99px;height:16px;background:#b9cbb1;"></div>
<span class="t" style="left:1096.0px;top:358.3px;font-size:15px;font-weight:bold;text-decoration:underline;text-underline-offset:1.5px;">RX offset kHz</span>
<div class="a lcd" style="left:774.5px;top:376.5px;width:112px;height:43px;color:#00ff00;font-size:27px;padding-right:3.6px;--p:17.5px"><b>8</b><b>5</b><b>0</b></div>
<div class="a knob" style="left:887.8px;top:381.3px;width:31.4px;height:31.4px;"><i style="left:13.7px;top:19.7px;width:10px;height:10px"></i></div>
<div class="a lcd" style="left:934.5px;top:376.5px;width:112px;height:43px;color:#00ff00;font-size:27px;padding-right:3.6px;--p:17.5px"><b>4</b><b>0</b><b>0</b><b>0</b></div>
<div class="a knob" style="left:1047.8px;top:381.3px;width:31.4px;height:31.4px;"><i style="left:13.7px;top:19.7px;width:10px;height:10px"></i></div>
<div class="a lcd" style="left:1094.5px;top:376.5px;width:112px;height:43px;color:#00ff00;font-size:27px;padding-right:3.6px;--p:17.5px"><b>0</b></div>
<div class="a knob" style="left:1207.8px;top:381.3px;width:31.4px;height:31.4px;"><i style="left:13.7px;top:19.7px;width:10px;height:10px"></i></div>
<span class="t" style="left:775.0px;top:438.3px;font-size:15px;font-weight:bold;transform:scaleX(0.980);">RX Gain dB</span>
<span class="t" style="left:935.0px;top:438.3px;font-size:15px;font-weight:bold;transform:scaleX(0.980);">TX Pwr dBm</span>
<span class="t" style="left:1095.0px;top:438.3px;font-size:15px;font-weight:bold;transform:scaleX(0.980);">Resolution</span>
<div class="a lcd" style="left:774.5px;top:456.5px;width:112px;height:43px;color:#00ff00;font-size:27px;padding-right:3.6px;--p:17.5px"><b>1</b><b>0</b><b>.</b><b>0</b></div>
<div class="a knob" style="left:887.8px;top:461.3px;width:31.4px;height:31.4px;"><i style="left:13.7px;top:19.7px;width:10px;height:10px"></i></div>
<div class="a lcd" style="left:934.5px;top:456.5px;width:112px;height:43px;color:#00ff00;font-size:27px;padding-right:3.6px;--p:17.5px"><b>−</b><b>1</b><b>0</b><b>.</b><b>0</b></div>
<div class="a knob" style="left:1047.8px;top:461.3px;width:31.4px;height:31.4px;"><i style="left:13.7px;top:19.7px;width:10px;height:10px"></i></div>
<div class="a lcd" style="left:1094.5px;top:456.5px;width:112px;height:43px;color:#00ff00;font-size:27px;padding-right:3.6px;--p:17.5px"><b>2</b><b>0</b><b>4</b><b>8</b></div>
<div class="a knob" style="left:1207.8px;top:461.3px;width:31.4px;height:31.4px;"><i style="left:13.7px;top:19.7px;width:10px;height:10px"></i></div>
<div class="a " style="left:776px;top:512px;width:21px;height:19px;background:#557d59;"></div>
<span class="t" style="left:800.0px;top:513.3px;font-size:15px;transform:scaleX(0.880);">Manual</span>
<div class="a " style="left:858px;top:512px;width:21px;height:19px;background:#557d59;"></div>
<span class="t" style="left:882.0px;top:513.3px;font-size:15px;transform:scaleX(0.880);">Pause</span>
<div class="a " style="left:936px;top:512px;width:21px;height:19px;background:#00d200;"></div>
<span class="t" style="left:960.0px;top:513.3px;font-size:15px;transform:scaleX(0.880);">Calib. Req. 0dB</span>
<div class="a " style="left:1096px;top:512px;width:21px;height:19px;background:#5a0a0e;"></div>
<span class="t" style="left:1120.0px;top:513.3px;font-size:15px;transform:scaleX(0.880);">Calib. Req. -40dB</span>
<div class="a " style="left:776px;top:542px;width:21px;height:19px;background:#808080;"></div>
<span class="t" style="left:800.0px;top:543.3px;font-size:15px;transform:scaleX(0.880);">Trigger</span>
<div class="a " style="left:858px;top:542px;width:21px;height:19px;background:#808080;"></div>
<span class="t" style="left:882.0px;top:543.3px;font-size:15px;transform:scaleX(0.880);">Step</span>
<div class="a " style="left:936px;top:542px;width:21px;height:19px;background:#5a0a0e;"></div>
<span class="t" style="left:960.0px;top:543.3px;font-size:15px;transform:scaleX(0.880);">Average</span>
<div class="a " style="left:1096px;top:542px;width:21px;height:19px;background:#5a0a0e;"></div>
<span class="t" style="left:1120.0px;top:543.3px;font-size:15px;transform:scaleX(0.880);">TX Off</span>
<div class="a " style="left:1178.5px;top:542px;width:21px;height:19px;background:#5a0a0e;"></div>
<span class="t" style="left:1205.0px;top:543.3px;font-size:15px;transform:scaleX(0.880);">E F</span>
<span class="t" style="left:765.0px;top:578.3px;font-size:15px;transform:scaleX(0.880);">Scan progress</span>
<div class="a " style="left:857px;top:580px;width:231px;height:12px;background:#e6e6e6;border:1px solid #c6c6c6;"></div>
<div class="a " style="left:859.5px;top:582.5px;width:6.5px;height:7.5px;background:#0a6ad6;"></div>
<div class="a " style="left:776px;top:624px;width:21px;height:20px;background:#557d59;"></div>
<span class="t" style="left:804.6px;top:626.3px;font-size:15px;font-weight:bold;transform:scaleX(0.980);">Generator</span>
<span class="t" style="left:775.0px;top:658.3px;font-size:15px;font-weight:bold;transform:scaleX(0.993);">Frequency kHz</span>
<div class="a " style="left:917px;top:658px;width:56px;height:16px;background:#b9cbb1;"></div>
<span class="t" style="left:929.9px;top:658.3px;font-size:15px;font-weight:bold;text-decoration:underline;text-underline-offset:1.5px;transform:scaleX(0.980);">MHz</span>
<span class="t" style="left:975.0px;top:658.3px;font-size:15px;font-weight:bold;transform:scaleX(0.980);">TX Pwr dBm</span>
<div class="a lcd" style="left:774.5px;top:676.5px;width:152px;height:43px;color:#00ff00;font-size:27px;padding-right:3.6px;--p:17.5px"><b>4</b><b>3</b><b>2</b><b>1</b><b>0</b><b>0</b></div>
<div class="a knob" style="left:927.8px;top:681.3px;width:31.4px;height:31.4px;"><i style="left:13.7px;top:19.7px;width:10px;height:10px"></i></div>
<div class="a lcd" style="left:974.5px;top:676.5px;width:112px;height:43px;color:#00ff00;font-size:27px;padding-right:3.6px;--p:17.5px"><b>−</b><b>4</b><b>0</b><b>.</b><b>0</b></div>
<div class="a knob" style="left:1087.8px;top:681.3px;width:31.4px;height:31.4px;"><i style="left:13.7px;top:19.7px;width:10px;height:10px"></i></div>
<div class="a " style="left:775px;top:728px;width:16px;height:14px;background:#5a0a0e;"></div>
<span class="t" style="left:795.0px;top:728.3px;font-size:15px;transform:scaleX(0.880);">3rd</span>
<div class="a " style="left:828px;top:728px;width:16px;height:14px;background:#5a0a0e;"></div>
<span class="t" style="left:847.0px;top:728.3px;font-size:15px;transform:scaleX(0.880);">5th</span>
<div class="a " style="left:880px;top:728px;width:16px;height:14px;background:#5a0a0e;"></div>
<span class="t" style="left:900.0px;top:728.3px;font-size:15px;transform:scaleX(0.880);">7th</span>
<div class="a " style="left:932.5px;top:728px;width:16px;height:14px;background:#5a0a0e;"></div>
<span class="t" style="left:952.5px;top:728.3px;font-size:15px;transform:scaleX(0.880);">9th</span>
<div class="a " style="left:985px;top:728px;width:16px;height:14px;background:#5a0a0e;"></div>
<span class="t" style="left:1005.0px;top:728.3px;font-size:15px;transform:scaleX(0.880);">TX On</span>
<span class="t" style="left:775.0px;top:758.3px;font-size:15px;font-weight:bold;transform:scaleX(0.980);">Modulation Hz</span>
<span class="t" style="left:975.0px;top:758.3px;font-size:15px;font-weight:bold;transform:scaleX(0.980);">Modulation Amp</span>
<div class="a lcd" style="left:774.5px;top:776.5px;width:152px;height:43px;color:#858585;font-size:27px;padding-right:3.6px;--p:17.5px"><b>1</b><b>0</b><b>0</b><b>0</b><b>.</b><b>0</b></div>
<div class="a knob" style="left:927.8px;top:781.3px;width:31.4px;height:31.4px;"><i style="left:13.7px;top:19.7px;width:10px;height:10px"></i></div>
<div class="a lcd" style="left:974.5px;top:776.5px;width:112px;height:43px;color:#858585;font-size:27px;padding-right:3.6px;--p:17.5px"><b>1</b><b>0</b><b>0</b></div>
<div class="a knob" style="left:1087.8px;top:781.3px;width:31.4px;height:31.4px;"><i style="left:13.7px;top:19.7px;width:10px;height:10px"></i></div>
<div class="a " style="left:776px;top:833px;width:16px;height:15px;background:#ee1c25;"></div>
<span class="t" style="left:795.0px;top:833.3px;font-size:15px;transform:scaleX(0.880);">CW</span>
<div class="a " style="left:828px;top:833px;width:16px;height:15px;background:#5a0a0e;"></div>
<span class="t" style="left:847.0px;top:833.3px;font-size:15px;transform:scaleX(0.880);">DC</span>
<div class="a " style="left:880px;top:833px;width:16px;height:15px;background:#5a0a0e;"></div>
<span class="t" style="left:897.0px;top:833.3px;font-size:15px;transform:scaleX(0.880);">FMW</span>
<div class="a " style="left:932.5px;top:833px;width:16px;height:15px;background:#5a0a0e;"></div>
<span class="t" style="left:950.0px;top:833.3px;font-size:15px;transform:scaleX(0.880);">FMN</span>
<div class="a " style="left:985px;top:833px;width:16px;height:15px;background:#5a0a0e;"></div>
<span class="t" style="left:1004.0px;top:833.3px;font-size:15px;transform:scaleX(0.880);">AM</span>
<div class="a " style="left:1037.5px;top:833px;width:16px;height:15px;background:#5a0a0e;"></div>
<span class="t" style="left:1057.5px;top:833.3px;font-size:15px;transform:scaleX(0.880);">EXT</span>
<div class="a " style="left:1090px;top:833px;width:16px;height:15px;background:#5a0a0e;"></div>
<span class="t" style="left:1108.5px;top:833.3px;font-size:15px;transform:scaleX(0.880);">ASK</span>
<div class="a " style="left:1142.5px;top:833px;width:16px;height:15px;background:#5a0a0e;"></div>
<span class="t" style="left:1162.0px;top:833.3px;font-size:15px;transform:scaleX(0.880);">FSK</span>
<div class="a " style="left:1195px;top:833px;width:16px;height:15px;background:#5a0a0e;"></div>
<span class="t" style="left:1214.5px;top:833.3px;font-size:15px;transform:scaleX(0.880);">NPR</span>
<span class="t" style="left:1141.0px;top:616.3px;font-size:15px;transform:scaleX(0.880);">OFF</span>
<span class="t" style="left:1178.5px;top:616.3px;font-size:15px;transform:scaleX(0.880);">-40</span>
<span class="t" style="left:1175.0px;top:632.3px;font-size:15px;transform:scaleX(0.880);">dBm</span>
<span class="t" style="left:1211.0px;top:616.3px;font-size:15px;transform:scaleX(0.880);">OFF</span>
<span class="t" style="left:1129.0px;top:728.3px;font-size:15px;transform:scaleX(0.880);">F-</span>
<div class="a " style="left:1146px;top:728px;width:15px;height:14px;background:#5a0a0e;"></div>
<div class="a " style="left:1181px;top:729px;width:16px;height:15px;background:#ee1c25;"></div>
<div class="a " style="left:1215px;top:728px;width:15px;height:14px;background:#5a0a0e;"></div>
<span class="t" style="left:1232.0px;top:728.3px;font-size:15px;transform:scaleX(0.880);">F+</span>
<span class="t" style="left:1180.3px;top:747.8px;font-size:15px;transform:scaleX(0.880);">FC</span>
<div class="a knob" style="left:1138.2px;top:748.7px;width:24.6px;height:24.6px;"><i style="left:9.5px;top:14.5px;width:8.6px;height:8.6px"></i></div>
<div class="a knob" style="left:1208.2px;top:748.7px;width:24.6px;height:24.6px;"><i style="left:9.5px;top:14.5px;width:8.6px;height:8.6px"></i></div>
<span class="t" style="left:1139.0px;top:781.3px;font-size:15px;transform:scaleX(0.880);">31.6</span>
<span class="t" style="left:1175.0px;top:791.3px;font-size:15px;transform:scaleX(0.880);">kHz</span>
<span class="t" style="left:1209.0px;top:781.3px;font-size:15px;transform:scaleX(0.880);">31.6</span>
<div class="a btn" style="left:21.5px;top:877.5px;width:73.5px;height:51.5px;"></div>
<span class="t" style="left:36.0px;top:888.3px;font-size:15px;transform:scaleX(0.880);">Edit SA</span>
<span class="t" style="left:35.2px;top:904.6px;font-size:15px;transform:scaleX(0.842);">markers</span>
<div class="a btn" style="left:104px;top:877.5px;width:73.5px;height:51.5px;"></div>
<span class="t" style="left:114.3px;top:888.3px;font-size:15px;transform:scaleX(0.889);">Edit TSA</span>
<span class="t" style="left:117.7px;top:904.6px;font-size:15px;transform:scaleX(0.842);">markers</span>
<div class="a btn" style="left:186.5px;top:877.5px;width:73.5px;height:51.5px;"></div>
<span class="t" style="left:192.0px;top:888.3px;font-size:15px;transform:scaleX(0.918);">TSA/SWE</span>
<span class="t" style="left:214.2px;top:904.6px;font-size:15px;transform:scaleX(0.880);">1st</span>
<div class="a btn" style="left:269px;top:877.5px;width:73.5px;height:51.5px;"></div>
<span class="t" style="left:274.5px;top:888.3px;font-size:15px;transform:scaleX(0.918);">TSA/SWE</span>
<span class="t" style="left:296.0px;top:904.6px;font-size:15px;transform:scaleX(0.880);">3rd</span>
<div class="a btn" style="left:351.5px;top:877.5px;width:73.5px;height:51.5px;"></div>
<span class="t" style="left:357.0px;top:888.3px;font-size:15px;transform:scaleX(0.918);">TSA/SWE</span>
<span class="t" style="left:378.8px;top:904.6px;font-size:15px;transform:scaleX(0.880);">5th</span>
<div class="a btn" style="left:434px;top:877.5px;width:73.5px;height:51.5px;"></div>
<span class="t" style="left:457.7px;top:888.3px;font-size:15px;transform:scaleX(0.880);">TSA</span>
<span class="t" style="left:443.8px;top:904.6px;font-size:15px;transform:scaleX(0.881);">RXOffset</span>
<div class="a btn" style="left:516.5px;top:877.5px;width:73.5px;height:51.5px;"></div>
<span class="t" style="left:540.2px;top:888.3px;font-size:15px;transform:scaleX(0.880);">TSA</span>
<span class="t" style="left:527.1px;top:904.6px;font-size:15px;transform:scaleX(0.880);">TXOffset</span>
<div class="a btn" style="left:599px;top:877.5px;width:73.5px;height:51.5px;"></div>
<span class="t" style="left:622.7px;top:888.3px;font-size:15px;transform:scaleX(0.880);">TSA</span>
<span class="t" style="left:614.6px;top:904.6px;font-size:15px;transform:scaleX(0.880);">Multipl.</span>
<div class="a btn" style="left:681px;top:877.5px;width:73.5px;height:51.5px;"></div>
<span class="t" style="left:701.4px;top:888.3px;font-size:15px;transform:scaleX(0.880);">Open</span>
<span class="t" style="left:688.3px;top:904.6px;font-size:15px;transform:scaleX(0.910);">TSA scan</span>
<div class="a btn" style="left:763.5px;top:877.5px;width:73.5px;height:51.5px;"></div>
<span class="t" style="left:785.0px;top:888.3px;font-size:15px;transform:scaleX(0.880);">Save</span>
<span class="t" style="left:770.8px;top:904.6px;font-size:15px;transform:scaleX(0.910);">TSA scan</span>
<div class="a btn" style="left:846px;top:877.5px;width:73.5px;height:51.5px;"></div>
<span class="t" style="left:867.5px;top:888.3px;font-size:15px;transform:scaleX(0.880);">Save</span>
<span class="t" style="left:853.5px;top:904.6px;font-size:15px;transform:scaleX(0.880);">JPG/BMP</span>
<div class="a btn" style="left:928.5px;top:877.5px;width:73.5px;height:51.5px;"></div>
<span class="t" style="left:935.5px;top:896.3px;font-size:15px;transform:scaleX(0.880);">Trace Log</span>
<div class="a btn" style="left:1011px;top:877.5px;width:73.5px;height:51.5px;"></div>
<span class="t" style="left:1023.7px;top:896.3px;font-size:15px;transform:scaleX(0.880);">Settings</span>
<div class="a btn" style="left:1102px;top:877.5px;width:73.5px;height:51.5px;"></div>
<span class="t" style="left:1121.3px;top:896.3px;font-size:15px;transform:scaleX(0.880);">About</span>
<div class="a btn" style="left:1184.5px;top:877.5px;width:73.5px;height:51.5px;"></div>
<span class="t" style="left:1195.9px;top:896.3px;font-size:15px;transform:scaleX(0.880);">Next&gt;&gt;&gt;</span>
</body></html>
